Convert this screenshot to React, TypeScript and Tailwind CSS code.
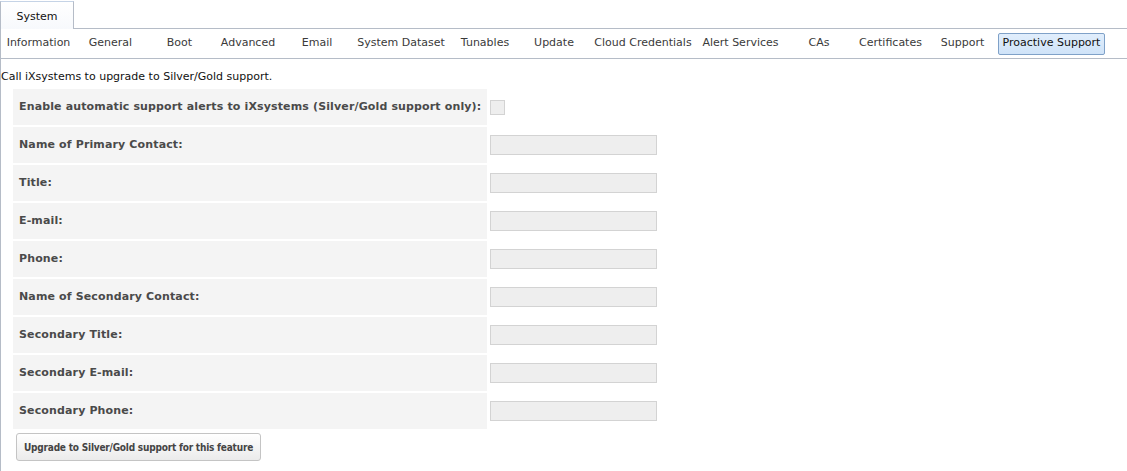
const subTabs: { label: string; w: number }[] = [
  { label: "Information", w: 73 },
  { label: "General", w: 71 },
  { label: "Boot", w: 67 },
  { label: "Advanced", w: 70 },
  { label: "Email", w: 68 },
  { label: "System Dataset", w: 100 },
  { label: "Tunables", w: 68 },
  { label: "Update", w: 70 },
  { label: "Cloud Credentials", w: 108 },
  { label: "Alert Services", w: 87 },
  { label: "CAs", w: 70 },
  { label: "Certificates", w: 73 },
  { label: "Support", w: 71 },
];

const fields = [
  "Name of Primary Contact:",
  "Title:",
  "E-mail:",
  "Phone:",
  "Name of Secondary Contact:",
  "Secondary Title:",
  "Secondary E-mail:",
  "Secondary Phone:",
];

export default function App() {
  return (
    <div className="w-[1127px] h-[471px] overflow-hidden bg-white text-[11px] text-[#222] font-['DejaVu_Sans',sans-serif]">
      {/* top tab strip */}
      <div className="flex h-[29px]">
        <div className="w-[74px] mt-[1px] border-t border-l border-r border-[#b5bcc7] border-t-[#c5d3e6] bg-gradient-to-b from-white to-[#f7f9fc] flex items-center justify-center text-[#111] pt-[3px]">
          System
        </div>
        <div className="flex-1 border-b border-[#b5bcc7]" />
      </div>

      <div className="border-l border-[#b5bcc7] h-full">
        {/* sub tabs */}
        <div className="flex items-center h-[30px] border-b border-[#b5bcc7] pl-[1px]">
          {subTabs.map((t) => (
            <div
              key={t.label}
              style={{ width: t.w }}
              className="text-center text-[#3a3a3a] whitespace-nowrap"
            >
              {t.label}
            </div>
          ))}
          <div className="w-[107px] h-[22px] flex items-center justify-center border border-[#7fa1c8] rounded-[2px] bg-gradient-to-b from-[#e1eefc] to-[#cfe3f8] text-[#111] whitespace-nowrap">
            Proactive Support
          </div>
        </div>

        <div className="pt-[11px] leading-[13px] text-[#111]">
          Call iXsystems to upgrade to Silver/Gold support.
        </div>

        {/* form */}
        <div className="ml-[12px] mt-[6px] flex flex-col gap-[2px]">
          <div className="flex items-center gap-[3px]">
            <div className="w-[474px] h-[36px] bg-[#f4f4f4] flex items-center pl-[6px] font-bold text-[#4a4a4a] whitespace-nowrap tracking-[0.14px]">
              Enable automatic support alerts to iXsystems (Silver/Gold support only):
            </div>
            <div className="w-[15px] h-[15px] border border-[#d3d3d3] bg-[#eeeeee]" />
          </div>
          {fields.map((f) => (
            <div key={f} className="flex items-center gap-[3px]">
              <div className="w-[474px] h-[36px] bg-[#f4f4f4] flex items-center pl-[6px] font-bold text-[#4a4a4a] whitespace-nowrap tracking-[0.14px]">
                {f}
              </div>
              <div className="w-[167px] h-[20px] border border-[#d3d3d3] bg-[#eeeeee]" />
            </div>
          ))}
        </div>

        <div className="ml-[15px] mt-[4px]">
          <button className="w-[245px] h-[28px] border border-[#c4c4c4] rounded-[3px] bg-gradient-to-b from-white to-[#ebebeb] text-[10px] font-bold text-[#444] font-['DejaVu_Sans_Condensed','DejaVu_Sans',sans-serif] tracking-[-0.2px]">
            Upgrade to Silver/Gold support for this feature
          </button>
        </div>
      </div>
    </div>
  );
}
